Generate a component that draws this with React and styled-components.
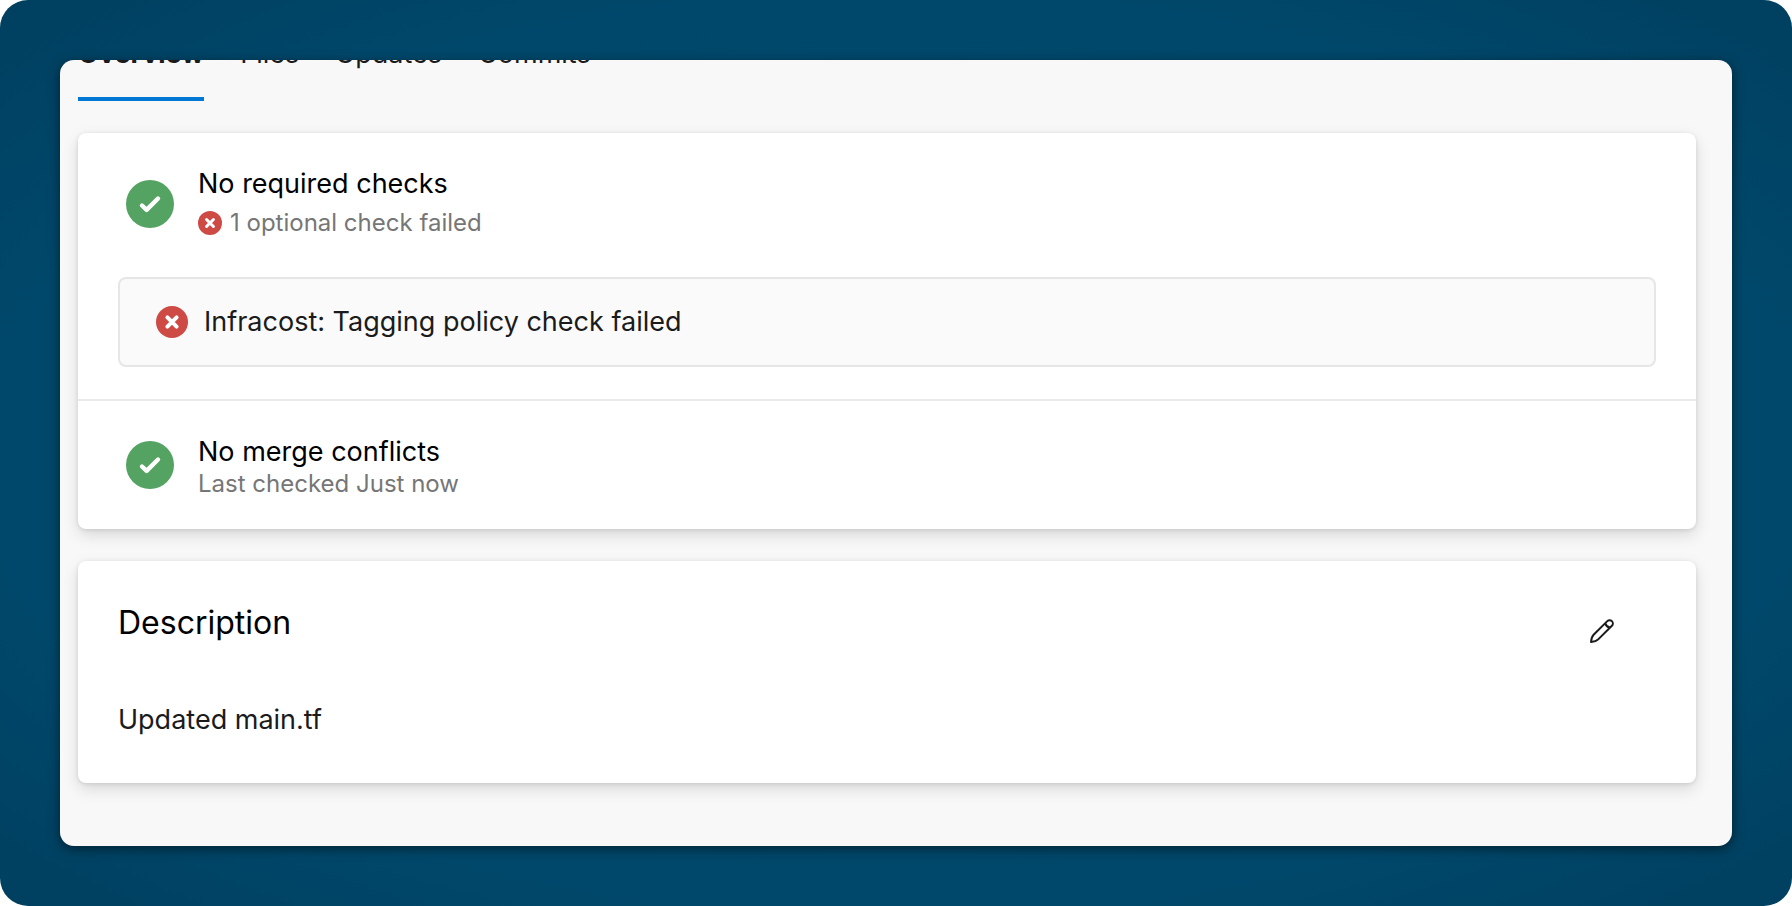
import React from "react";
import styled, { createGlobalStyle } from "styled-components";

const GlobalStyle = createGlobalStyle`
  *, *::before, *::after { box-sizing: border-box; }
  body {
    margin: 0;
    background: #fff;
    color: #1b1b1c;
    font-family: Inter, "Liberation Sans", sans-serif;
    font-size: 27px;
    line-height: 36px;
  }
  h2, h3, p, ul { margin: 0; padding: 0; font-weight: 400; }
`;

const Backdrop = styled.div`
  display: flex;
  min-height: 100vh;
  padding: 60px;
  border-radius: 28px;
  background: radial-gradient(ellipse farthest-corner at center, #004a6e 0%, #00486b 72%, #003f5f 100%);
`;

const Panel = styled.main`
  flex: 1;
  min-width: 0;
  padding: 0 36px 31px 18px;
  overflow: hidden;
  border-radius: 14px;
  background: #f8f8f8;
  box-shadow: 0 3px 12px rgba(0, 0, 0, 0.5);
`;

const Tabs = styled.nav`
  display: flex;
  gap: 36px;
  margin: -24px 0 32px;
`;

const Tab = styled.a`
  height: 65px;
  border-bottom: 4px solid ${(p) => (p.$active ? "#0078d4" : "transparent")};
  color: #1b1b1c;
  font-weight: ${(p) => (p.$active ? 700 : 400)};
  text-decoration: none;
`;

const Card = styled.section`
  margin-bottom: 32px;
  border-radius: 8px;
  background: #fff;
  box-shadow: 0 6px 16px rgba(0, 0, 0, 0.13), 0 1px 4px rgba(0, 0, 0, 0.11);
`;

const Section = styled.div`
  padding: 32px 40px;

  & + & {
    border-top: 2px solid #eaeaea;
  }
`;

const StatusRow = styled.div`
  display: flex;
  align-items: center;
  gap: 24px;
  padding-left: 8px;
`;

const StatusTitle = styled.h3`
  color: #000;
  font-size: 27px;
  line-height: 38px;
`;

const StatusNote = styled.p`
  display: flex;
  align-items: center;
  gap: 8px;
  color: #767676;
  font-size: 24px;
  line-height: ${(p) => (p.$roomy ? 40 : 26)}px;
`;

const CheckList = styled.ul`
  margin-top: 34px;
  border: 2px solid #e6e6e6;
  border-radius: 8px;
  background: #fafafa;
  list-style: none;
`;

const CheckItem = styled.li`
  display: flex;
  align-items: center;
  gap: 16px;
  min-height: 86px;
  padding: 0 36px;
`;

const DescriptionBody = styled.div`
  padding: 40px 40px 45px;
`;

const DescriptionHeader = styled.header`
  display: flex;
  align-items: flex-start;
  justify-content: space-between;
  margin-bottom: 41px;
  padding-right: 24px;
`;

const DescriptionTitle = styled.h2`
  color: #000;
  font-size: 32px;
  line-height: 44px;
`;

const IconButton = styled.button`
  display: flex;
  align-items: center;
  justify-content: center;
  width: 60px;
  height: 60px;
  padding: 0;
  border: 0;
  background: transparent;
  color: #1b1b1c;
  cursor: pointer;
`;

const Icon = styled.svg`
  display: block;
  flex: none;
  fill: none;
`;

function SuccessIcon() {
  return (
    <Icon width="48" height="48" viewBox="0 0 48 48" aria-hidden="true">
      <circle cx="24" cy="24" r="24" fill="#55a362" />
      <path d="M16 25.5 20.6 29.9 32 18.5" stroke="#fff" strokeWidth="4.4" strokeLinecap="round" strokeLinejoin="round" />
    </Icon>
  );
}

function FailedIcon({ size }) {
  return (
    <Icon width={size} height={size} viewBox="0 0 32 32" aria-hidden="true">
      <circle cx="16" cy="16" r="16" fill="#cd4a45" />
      <path d="M11.4 11.4 20.6 20.6M20.6 11.4 11.4 20.6" stroke="#fff" strokeWidth="4" strokeLinecap="round" />
    </Icon>
  );
}

function PencilIcon() {
  return (
    <Icon width="24" height="24" viewBox="0 0 24 24" aria-hidden="true">
      <path
        d="M17.3 2.1a3.2 3.2 0 0 1 4.6 4.6L8.2 20.4C6.9 21.7 4.4 22.7 1 23c.3-3.4 1.3-5.9 2.6-7.2ZM15.4 4.2c.5 2.4 2 3.9 4.4 4.4"
        stroke="currentColor"
        strokeWidth="2"
        strokeLinejoin="round"
      />
    </Icon>
  );
}

export default function App() {
  return (
    <>
      <GlobalStyle />
      <Backdrop>
        <Panel>
          <Tabs aria-label="Pull request">
            <Tab href="#overview" $active aria-current="page">Overview</Tab>
            <Tab href="#files">Files</Tab>
            <Tab href="#updates">Updates</Tab>
            <Tab href="#commits">Commits</Tab>
          </Tabs>

          <Card>
            <Section>
              <StatusRow>
                <SuccessIcon />
                <div>
                  <StatusTitle>No required checks</StatusTitle>
                  <StatusNote $roomy>
                    <FailedIcon size={24} />
                    1 optional check failed
                  </StatusNote>
                </div>
              </StatusRow>
              <CheckList>
                <CheckItem>
                  <FailedIcon size={32} />
                  Infracost: Tagging policy check failed
                </CheckItem>
              </CheckList>
            </Section>
            <Section>
              <StatusRow>
                <SuccessIcon />
                <div>
                  <StatusTitle>No merge conflicts</StatusTitle>
                  <StatusNote>Last checked Just now</StatusNote>
                </div>
              </StatusRow>
            </Section>
          </Card>

          <Card>
            <DescriptionBody>
              <DescriptionHeader>
                <DescriptionTitle>Description</DescriptionTitle>
                <IconButton type="button" aria-label="Edit description">
                  <PencilIcon />
                </IconButton>
              </DescriptionHeader>
              <p>Updated main.tf</p>
            </DescriptionBody>
          </Card>
        </Panel>
      </Backdrop>
    </>
  );
}
